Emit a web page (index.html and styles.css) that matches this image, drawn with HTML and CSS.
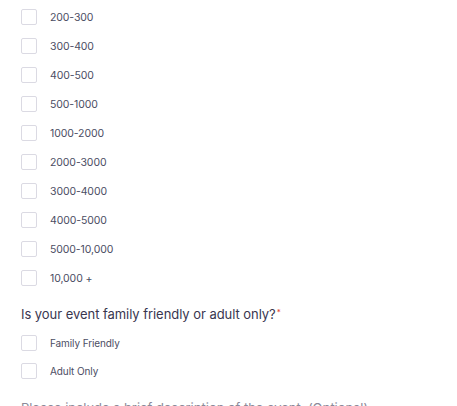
FILE: index.html
```html
<!DOCTYPE html>
<html>
<head>
<meta charset="utf-8">
<link rel="stylesheet" href="styles.css">
</head>
<body>
<div class="form">
  <ul class="options">
    <li class="opt"><span class="box"></span><span class="label">200-300</span></li>
    <li class="opt"><span class="box"></span><span class="label">300-400</span></li>
    <li class="opt"><span class="box"></span><span class="label">400-500</span></li>
    <li class="opt"><span class="box"></span><span class="label">500-1000</span></li>
    <li class="opt"><span class="box"></span><span class="label">1000-2000</span></li>
    <li class="opt"><span class="box"></span><span class="label">2000-3000</span></li>
    <li class="opt"><span class="box"></span><span class="label">3000-4000</span></li>
    <li class="opt"><span class="box"></span><span class="label">4000-5000</span></li>
    <li class="opt"><span class="box"></span><span class="label">5000-10,000</span></li>
    <li class="opt"><span class="box"></span><span class="label">10,000 +</span></li>
  </ul>
  <div class="question">Is your event family friendly or adult only?<span class="req">*</span></div>
  <ul class="options options-small">
    <li class="opt"><span class="box"></span><span class="label">Family Friendly</span></li>
    <li class="opt"><span class="box"></span><span class="label">Adult Only</span></li>
  </ul>
  <div class="question faded">Please include a brief description of the event. (Optional)</div>
</div>
</body>
</html>
```
FILE: styles.css
```css
html, body {
  margin: 0;
  padding: 0;
  background: #ffffff;
  overflow: hidden;
}
body {
  font-family: Inter, "Noto Sans", sans-serif;
  color: #39364f;
}
.form {
  padding: 4px 0 0 21px;
}
.options {
  list-style: none;
  margin: 0;
  padding: 0;
  display: flex;
  flex-direction: column;
  gap: 3px;
}
.opt {
  display: flex;
  align-items: center;
  height: 26px;
}
.box {
  width: 14px;
  height: 14px;
  border: 1px solid #dbdae3;
  border-radius: 2px;
  background: #fff;
  flex: none;
}
.label {
  margin-left: 13px;
  font-size: 10.5px;
  color: #4b4d63;
  letter-spacing: -0.1px;
}
.question {
  margin-top: 14px;
  font-size: 13px;
  line-height: 18px;
  color: #39364f;
  letter-spacing: -0.05px;
}
.req {
  color: #e0412f;
  font-size: 8px;
  vertical-align: top;
  margin-left: 1px;
  position: relative;
  top: -2px;
}
.options-small {
  margin-top: 7px;
  gap: 2px;
}
.options-small .label {
  font-size: 10px;
}
.faded {
  margin-top: 15px;
  color: #8c8a99;
}
```
